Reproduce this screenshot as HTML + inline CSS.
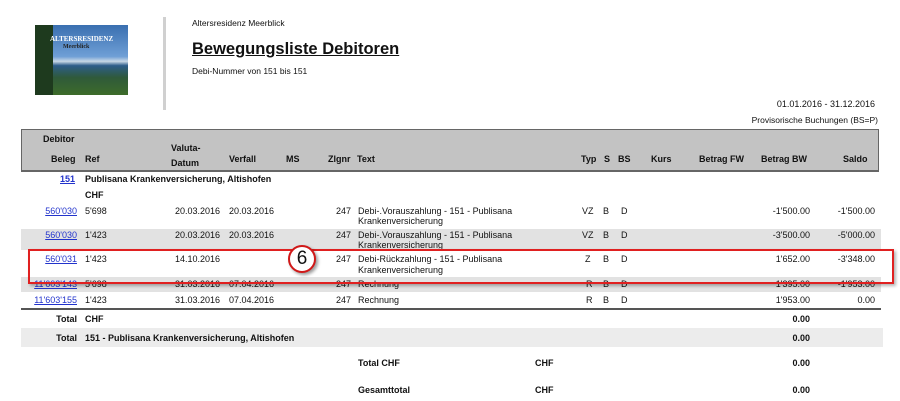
<!DOCTYPE html>
<html><head><style>
body{margin:0;width:900px;height:401px;background:#fff;font-family:"Liberation Sans",sans-serif;font-size:9px;color:#111;position:relative;overflow:hidden}
.a{position:absolute;white-space:nowrap}
.r{text-align:right}
.b{font-weight:bold}
a,.l{color:#2233cc;text-decoration:underline}
.band{position:absolute;left:21px;width:860px;background:#e2e2e2}
</style></head><body>
<div class="a" style="left:35px;top:25px;width:93px;height:70px;background:linear-gradient(#3a6fb0 0%,#6f9fd6 45%,#c9d8e6 52%,#2d5d8a 58%,#2f5a3a 75%,#3d6b2a 100%)"></div>
<div class="a" style="left:35px;top:25px;width:18px;height:70px;background:#1e3a1e"></div>
<div class="a" style="left:50px;top:35px;color:#fff;font-family:'Liberation Serif',serif;font-size:7px;font-weight:bold">ALTERSRESIDENZ</div>
<div class="a" style="left:63px;top:44px;color:#222;font-family:'Liberation Serif',serif;font-size:6px;font-weight:bold">Meerblick</div>
<div class="a" style="left:163px;top:17px;width:3px;height:93px;background:#d0d0d0"></div>
<div class="a" style="left:192px;top:18px;font-size:8.5px">Altersresidenz Meerblick</div>
<div class="a b" style="left:192px;top:40px;font-size:16.5px;text-decoration:underline">Bewegungsliste Debitoren</div>
<div class="a" style="left:192px;top:66px;font-size:8.5px">Debi-Nummer von 151 bis 151</div>
<div class="a r" style="right:25px;top:99px;font-size:9px">01.01.2016 - 31.12.2016</div>
<div class="a r" style="right:22px;top:115px;font-size:8.5px">Provisorische Buchungen (BS=P)</div>

<div class="a" style="left:21px;top:129px;width:856px;height:40px;background:#c3c3c3;border:1px solid #666;border-bottom-width:2px"></div>
<div class="a b" style="left:43px;top:134px">Debitor</div>
<div class="a b" style="left:51px;top:154px">Beleg</div>
<div class="a b" style="left:85px;top:154px">Ref</div>
<div class="a b" style="left:171px;top:143px">Valuta-</div>
<div class="a b" style="left:171px;top:158px">Datum</div>
<div class="a b" style="left:229px;top:154px">Verfall</div>
<div class="a b" style="left:286px;top:154px">MS</div>
<div class="a b" style="left:328px;top:154px">Zlgnr</div>
<div class="a b" style="left:357px;top:154px">Text</div>
<div class="a b" style="left:581px;top:154px">Typ</div>
<div class="a b" style="left:604px;top:154px">S</div>
<div class="a b" style="left:618px;top:154px">BS</div>
<div class="a b" style="left:651px;top:154px">Kurs</div>
<div class="a b" style="left:699px;top:154px">Betrag FW</div>
<div class="a b" style="left:761px;top:154px">Betrag BW</div>
<div class="a b" style="left:843px;top:154px">Saldo</div>

<div class="a b" style="left:60px;top:174px"><span class="l">151</span></div>
<div class="a b" style="left:85px;top:174px">Publisana Krankenversicherung, Altishofen</div>
<div class="a b" style="left:85px;top:190px">CHF</div>

<div class="band" style="top:229px;height:21px"></div>
<div class="band" style="top:277px;height:15px"></div>
<div class="a" style="left:21px;top:308px;width:860px;height:2px;background:#555"></div>
<div class="band" style="top:328px;height:19px;width:862px;background:#ececec"></div>

<div class="a r l" style="right:823px;top:206px">560'030</div><div class="a" style="left:85px;top:206px">5'698</div><div class="a" style="left:175px;top:206px">20.03.2016</div><div class="a" style="left:229px;top:206px">20.03.2016</div><div class="a" style="left:336px;top:206px">247</div><div class="a" style="left:358px;top:206px;line-height:10px">Debi-.Vorauszahlung - 151 - Publisana<br>Krankenversicherung</div><div class="a" style="left:582px;top:206px">VZ</div><div class="a" style="left:603px;top:206px">B</div><div class="a" style="left:621px;top:206px">D</div><div class="a r" style="right:90px;top:206px">-1'500.00</div><div class="a r" style="right:25px;top:206px">-1'500.00</div>

<div class="a r l" style="right:823px;top:230px">560'030</div><div class="a" style="left:85px;top:230px">1'423</div><div class="a" style="left:175px;top:230px">20.03.2016</div><div class="a" style="left:229px;top:230px">20.03.2016</div><div class="a" style="left:336px;top:230px">247</div><div class="a" style="left:358px;top:230px;line-height:10px">Debi-.Vorauszahlung - 151 - Publisana<br>Krankenversicherung</div><div class="a" style="left:582px;top:230px">VZ</div><div class="a" style="left:603px;top:230px">B</div><div class="a" style="left:621px;top:230px">D</div><div class="a r" style="right:90px;top:230px">-3'500.00</div><div class="a r" style="right:25px;top:230px">-5'000.00</div>

<div class="a r l" style="right:823px;top:254px">560'031</div><div class="a" style="left:85px;top:254px">1'423</div><div class="a" style="left:175px;top:254px">14.10.2016</div><div class="a" style="left:336px;top:254px">247</div><div class="a" style="left:358px;top:254px;line-height:11px">Debi-Rückzahlung - 151 - Publisana<br>Krankenversicherung</div><div class="a" style="left:585px;top:254px">Z</div><div class="a" style="left:603px;top:254px">B</div><div class="a" style="left:621px;top:254px">D</div><div class="a r" style="right:90px;top:254px">1'652.00</div><div class="a r" style="right:25px;top:254px">-3'348.00</div>

<div class="a r l" style="right:823px;top:279px">11'603'143</div><div class="a" style="left:85px;top:279px">5'698</div><div class="a" style="left:175px;top:279px">31.03.2016</div><div class="a" style="left:229px;top:279px">07.04.2016</div><div class="a" style="left:336px;top:279px">247</div><div class="a" style="left:358px;top:279px">Rechnung</div><div class="a" style="left:586px;top:279px">R</div><div class="a" style="left:603px;top:279px">B</div><div class="a" style="left:621px;top:279px">D</div><div class="a r" style="right:90px;top:279px">1'395.00</div><div class="a r" style="right:25px;top:279px">-1'953.00</div>

<div class="a r l" style="right:823px;top:295px">11'603'155</div><div class="a" style="left:85px;top:295px">1'423</div><div class="a" style="left:175px;top:295px">31.03.2016</div><div class="a" style="left:229px;top:295px">07.04.2016</div><div class="a" style="left:336px;top:295px">247</div><div class="a" style="left:358px;top:295px">Rechnung</div><div class="a" style="left:586px;top:295px">R</div><div class="a" style="left:603px;top:295px">B</div><div class="a" style="left:621px;top:295px">D</div><div class="a r" style="right:90px;top:295px">1'953.00</div><div class="a r" style="right:25px;top:295px">0.00</div>

<div class="a r b" style="right:823px;top:314px">Total</div><div class="a b" style="left:85px;top:314px">CHF</div><div class="a r b" style="right:90px;top:314px">0.00</div>
<div class="a r b" style="right:823px;top:333px">Total</div><div class="a b" style="left:85px;top:333px">151 - Publisana Krankenversicherung, Altishofen</div><div class="a r b" style="right:90px;top:333px">0.00</div>
<div class="a b" style="left:358px;top:358px">Total CHF</div><div class="a b" style="left:535px;top:358px">CHF</div><div class="a r b" style="right:90px;top:358px">0.00</div>
<div class="a b" style="left:358px;top:385px">Gesamttotal</div><div class="a b" style="left:535px;top:385px">CHF</div><div class="a r b" style="right:90px;top:385px">0.00</div>

<div class="a" style="left:28px;top:249px;width:862px;height:31px;border:2px solid #e02020;box-shadow:2px 2px 3px rgba(0,0,0,.3)"></div>
<div class="a" style="left:288px;top:245px;width:24px;height:24px;border-radius:50%;background:#fff;border:2px solid #d01818;box-shadow:2px 2px 3px rgba(0,0,0,.4);text-align:center;font-size:19px;line-height:24px;color:#111">6</div>
</body></html>
